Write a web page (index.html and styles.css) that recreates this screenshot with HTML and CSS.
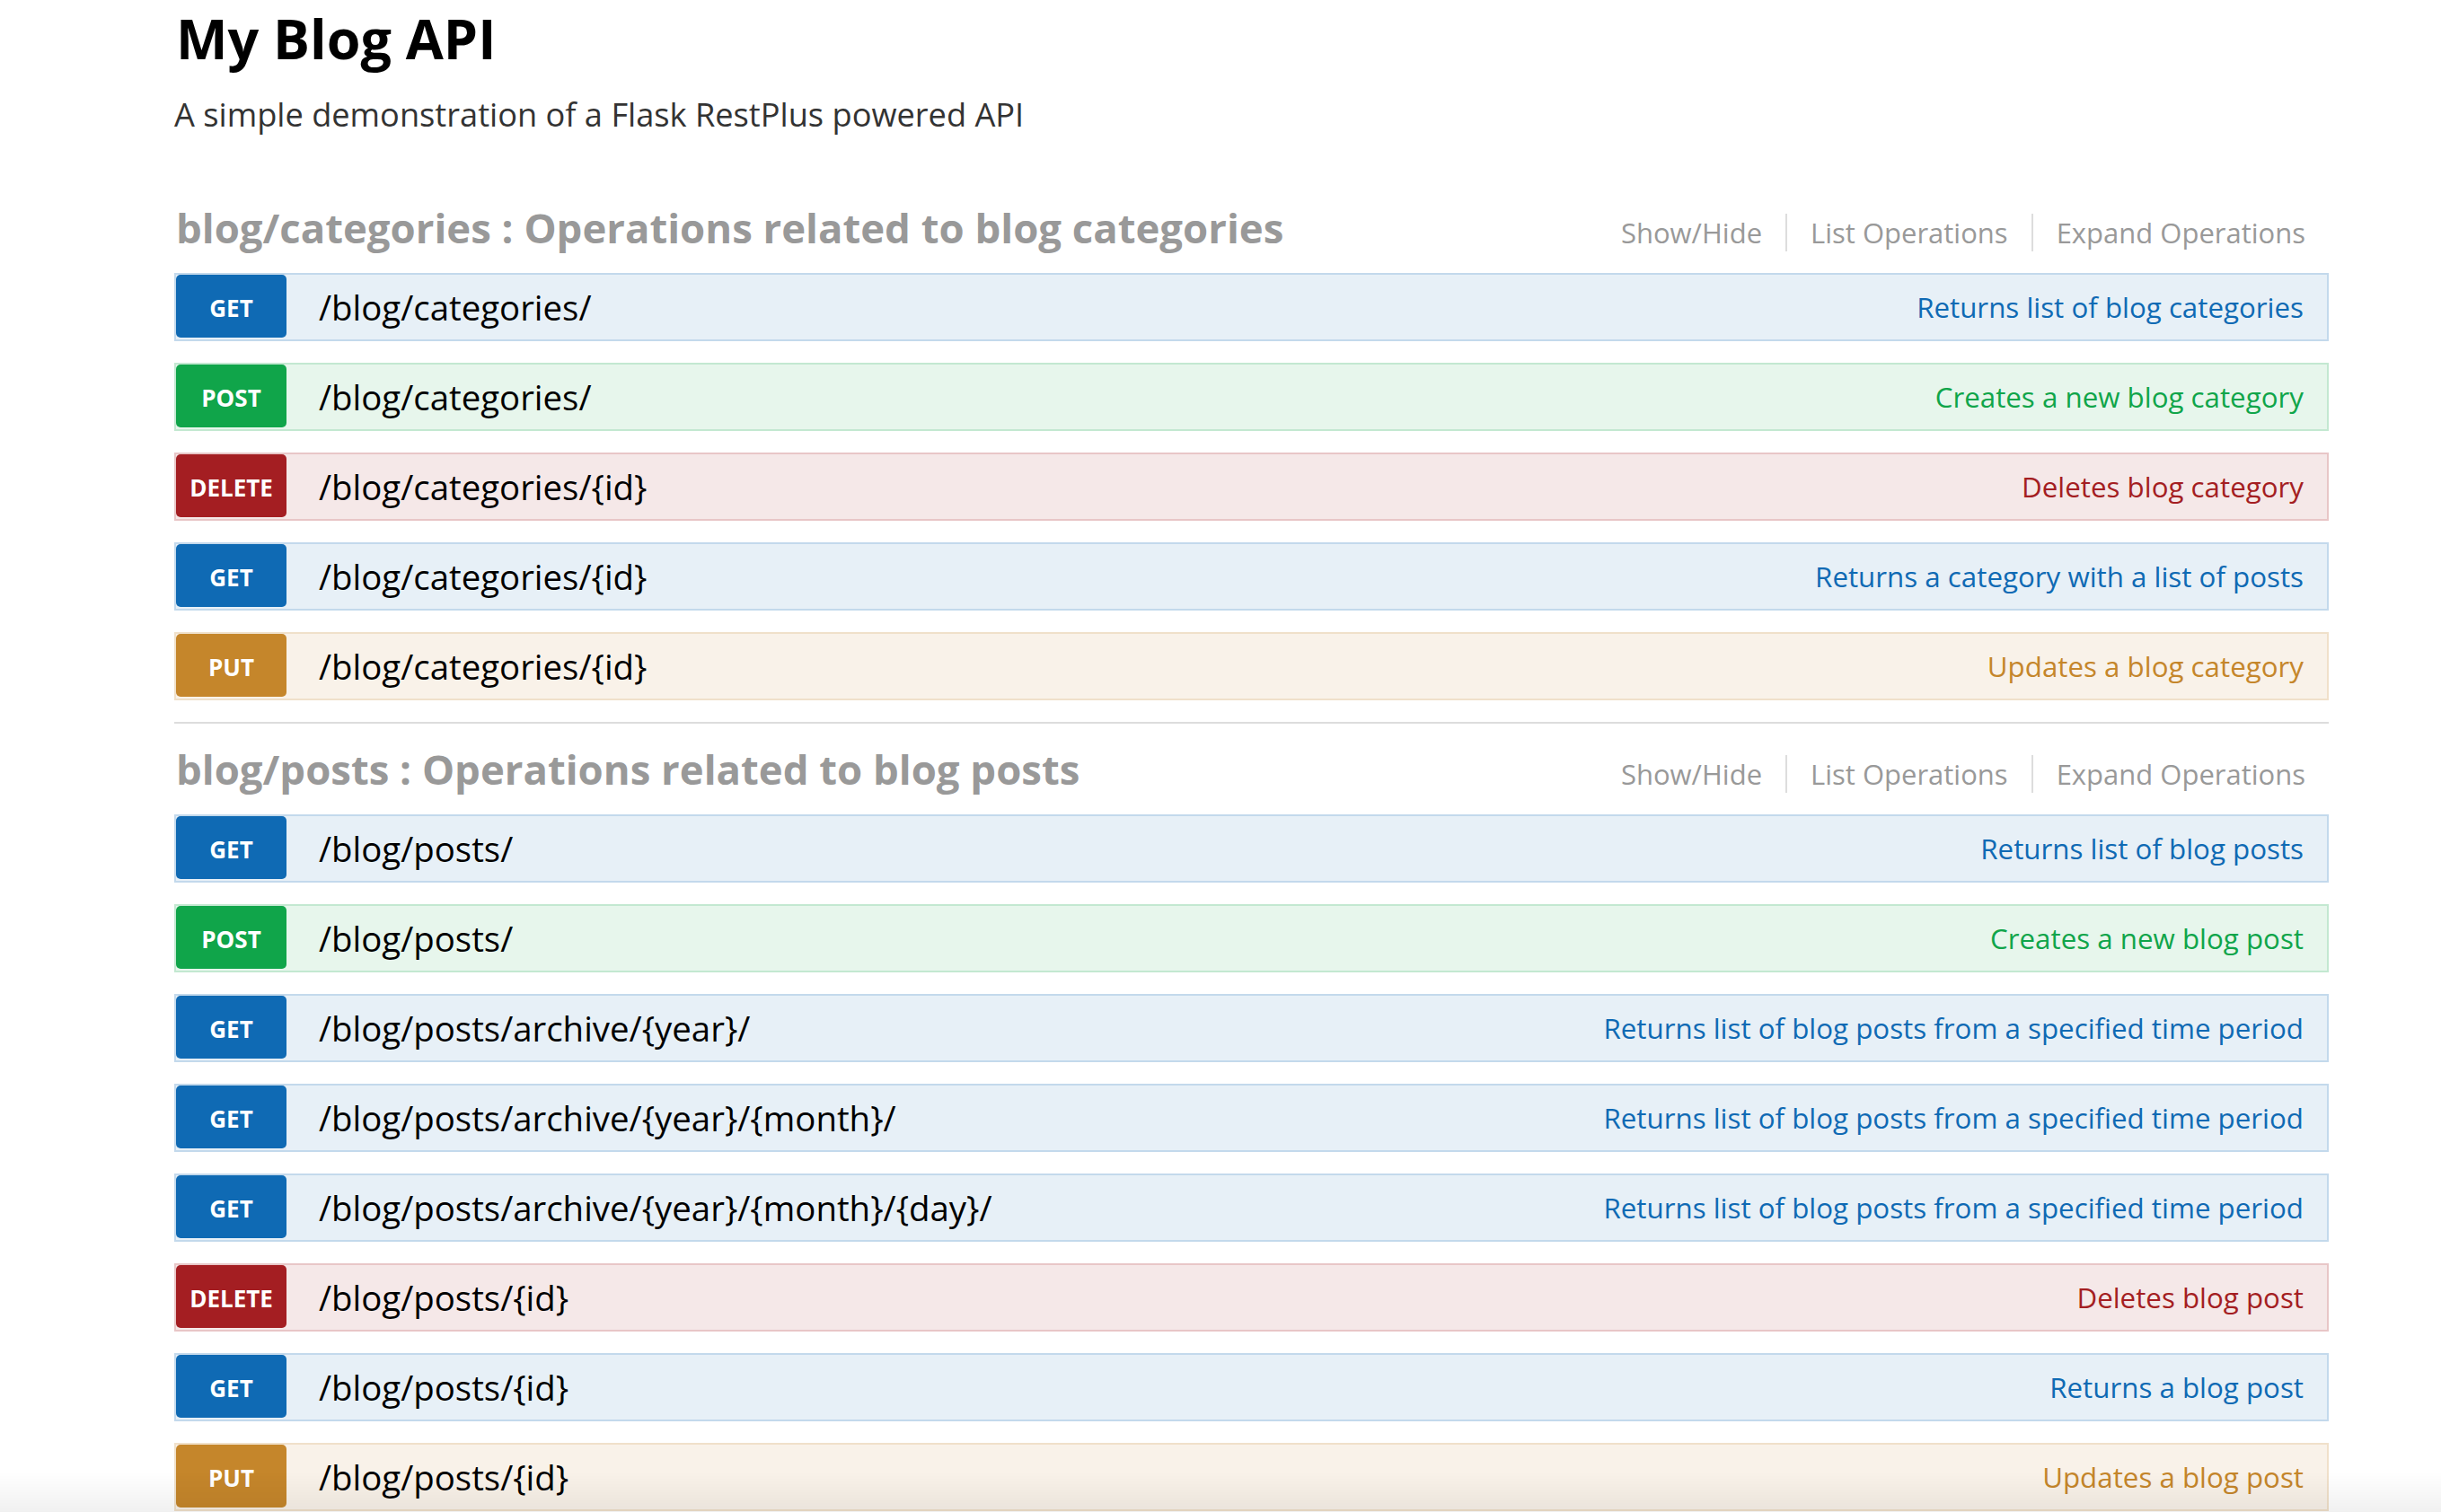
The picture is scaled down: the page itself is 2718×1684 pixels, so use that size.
FILE: index.html
```html
<!DOCTYPE html>
<html lang="en">
<head>
<meta charset="utf-8">
<title>My Blog API</title>
<link rel="stylesheet" href="styles.css">
</head>
<body>
<div class="wrap">
  <header class="info">
    <h1 class="title">My Blog API</h1>
    <p class="desc">A simple demonstration of a Flask RestPlus powered API</p>
  </header>

  <section class="resource">
    <div class="res-head">
      <h2 class="res-title">blog/categories : Operations related to blog categories</h2>
      <ul class="options">
        <li>Show/Hide</li>
        <li>List Operations</li>
        <li>Expand Operations</li>
      </ul>
    </div>
    <ul class="ops">
      <li class="op get"><span class="method">GET</span><span class="path">/blog/categories/</span><span class="summary">Returns list of blog categories</span></li>
      <li class="op post"><span class="method">POST</span><span class="path">/blog/categories/</span><span class="summary">Creates a new blog category</span></li>
      <li class="op delete"><span class="method">DELETE</span><span class="path">/blog/categories/{id}</span><span class="summary">Deletes blog category</span></li>
      <li class="op get"><span class="method">GET</span><span class="path">/blog/categories/{id}</span><span class="summary">Returns a category with a list of posts</span></li>
      <li class="op put"><span class="method">PUT</span><span class="path">/blog/categories/{id}</span><span class="summary">Updates a blog category</span></li>
    </ul>
  </section>

  <section class="resource">
    <div class="res-head">
      <h2 class="res-title">blog/posts : Operations related to blog posts</h2>
      <ul class="options">
        <li>Show/Hide</li>
        <li>List Operations</li>
        <li>Expand Operations</li>
      </ul>
    </div>
    <ul class="ops">
      <li class="op get"><span class="method">GET</span><span class="path">/blog/posts/</span><span class="summary">Returns list of blog posts</span></li>
      <li class="op post"><span class="method">POST</span><span class="path">/blog/posts/</span><span class="summary">Creates a new blog post</span></li>
      <li class="op get"><span class="method">GET</span><span class="path">/blog/posts/archive/{year}/</span><span class="summary">Returns list of blog posts from a specified time period</span></li>
      <li class="op get"><span class="method">GET</span><span class="path">/blog/posts/archive/{year}/{month}/</span><span class="summary">Returns list of blog posts from a specified time period</span></li>
      <li class="op get"><span class="method">GET</span><span class="path">/blog/posts/archive/{year}/{month}/{day}/</span><span class="summary">Returns list of blog posts from a specified time period</span></li>
      <li class="op delete"><span class="method">DELETE</span><span class="path">/blog/posts/{id}</span><span class="summary">Deletes blog post</span></li>
      <li class="op get"><span class="method">GET</span><span class="path">/blog/posts/{id}</span><span class="summary">Returns a blog post</span></li>
      <li class="op put"><span class="method">PUT</span><span class="path">/blog/posts/{id}</span><span class="summary">Updates a blog post</span></li>
    </ul>
  </section>
</div>
<div class="bottom-shade"></div>
</body>
</html>
```

FILE: styles.css
```css
html, body {
  margin: 0;
  padding: 0;
  background: #ffffff;
}

body {
  font-family: "Open Sans", "Noto Sans", "DejaVu Sans", sans-serif;
  color: #000;
}

.wrap {
  margin-left: 194px;
  width: 2399px;
}

.info {
  padding-top: 12px;
}

.title {
  margin: 0;
  font-size: 61px;
  line-height: 61px;
  font-weight: 700;
  color: #000;
  padding-left: 2px;
}

.desc {
  margin: 36px 0 0 0;
  font-size: 36.2px;
  line-height: 36px;
  color: #333;
}

.resource {
  margin-top: 58px;
  padding-top: 27px;
  border-bottom: 2px solid #dddddd;
}

.resource + .resource {
  margin-top: 0;
}

.res-head {
  display: flex;
  justify-content: space-between;
  align-items: baseline;
  margin-bottom: 24px;
}

.res-title {
  margin: 0;
  font-size: 45.5px;
  line-height: 46px;
  font-weight: 700;
  color: #999999;
  padding-left: 2px;
}

.options {
  list-style: none;
  margin: 0;
  padding: 0;
  display: flex;
}

.options li {
  font-size: 31px;
  line-height: 42px;
  color: #999999;
  padding: 0 26px;
  border-right: 2px solid #dddddd;
}

.options li:last-child {
  border-right: none;
}

.ops {
  list-style: none;
  margin: 0;
  padding: 0;
}

.op {
  display: flex;
  align-items: center;
  height: 72px;
  border: 2px solid;
  margin-bottom: 24px;
}

.method {
  align-self: flex-start;
  width: 123px;
  height: 70px;
  border-radius: 5px;
  color: #fff;
  font-weight: 700;
  font-size: 26px;
  line-height: 75px;
  text-align: center;
  text-transform: uppercase;
}

.path {
  margin-left: 36px;
  font-size: 38.4px;
  color: #000;
}

.summary {
  margin-left: auto;
  padding-right: 26px;
  font-size: 31.3px;
}

.get { background: #e7f0f7; border-color: #c3d9ec; }
.get .method { background: #0f6ab4; }
.get .summary { color: #0f6ab4; }

.post { background: #e7f6ec; border-color: #c3e8d1; }
.post .method { background: #10a54a; }
.post .summary { color: #10a54a; }

.delete { background: #f5e8e8; border-color: #e8c6c7; }
.delete .method { background: #a41e22; }
.delete .summary { color: #a41e22; }

.put { background: #f9f2e9; border-color: #f0e0ca; }
.put .method { background: #c5862b; }
.put .summary { color: #c5862b; }

.bottom-shade {
  position: fixed;
  left: 0;
  right: 0;
  bottom: 0;
  height: 44px;
  pointer-events: none;
  background: linear-gradient(to bottom, rgba(0, 0, 0, 0), rgba(0, 0, 0, 0.06));
}
```
